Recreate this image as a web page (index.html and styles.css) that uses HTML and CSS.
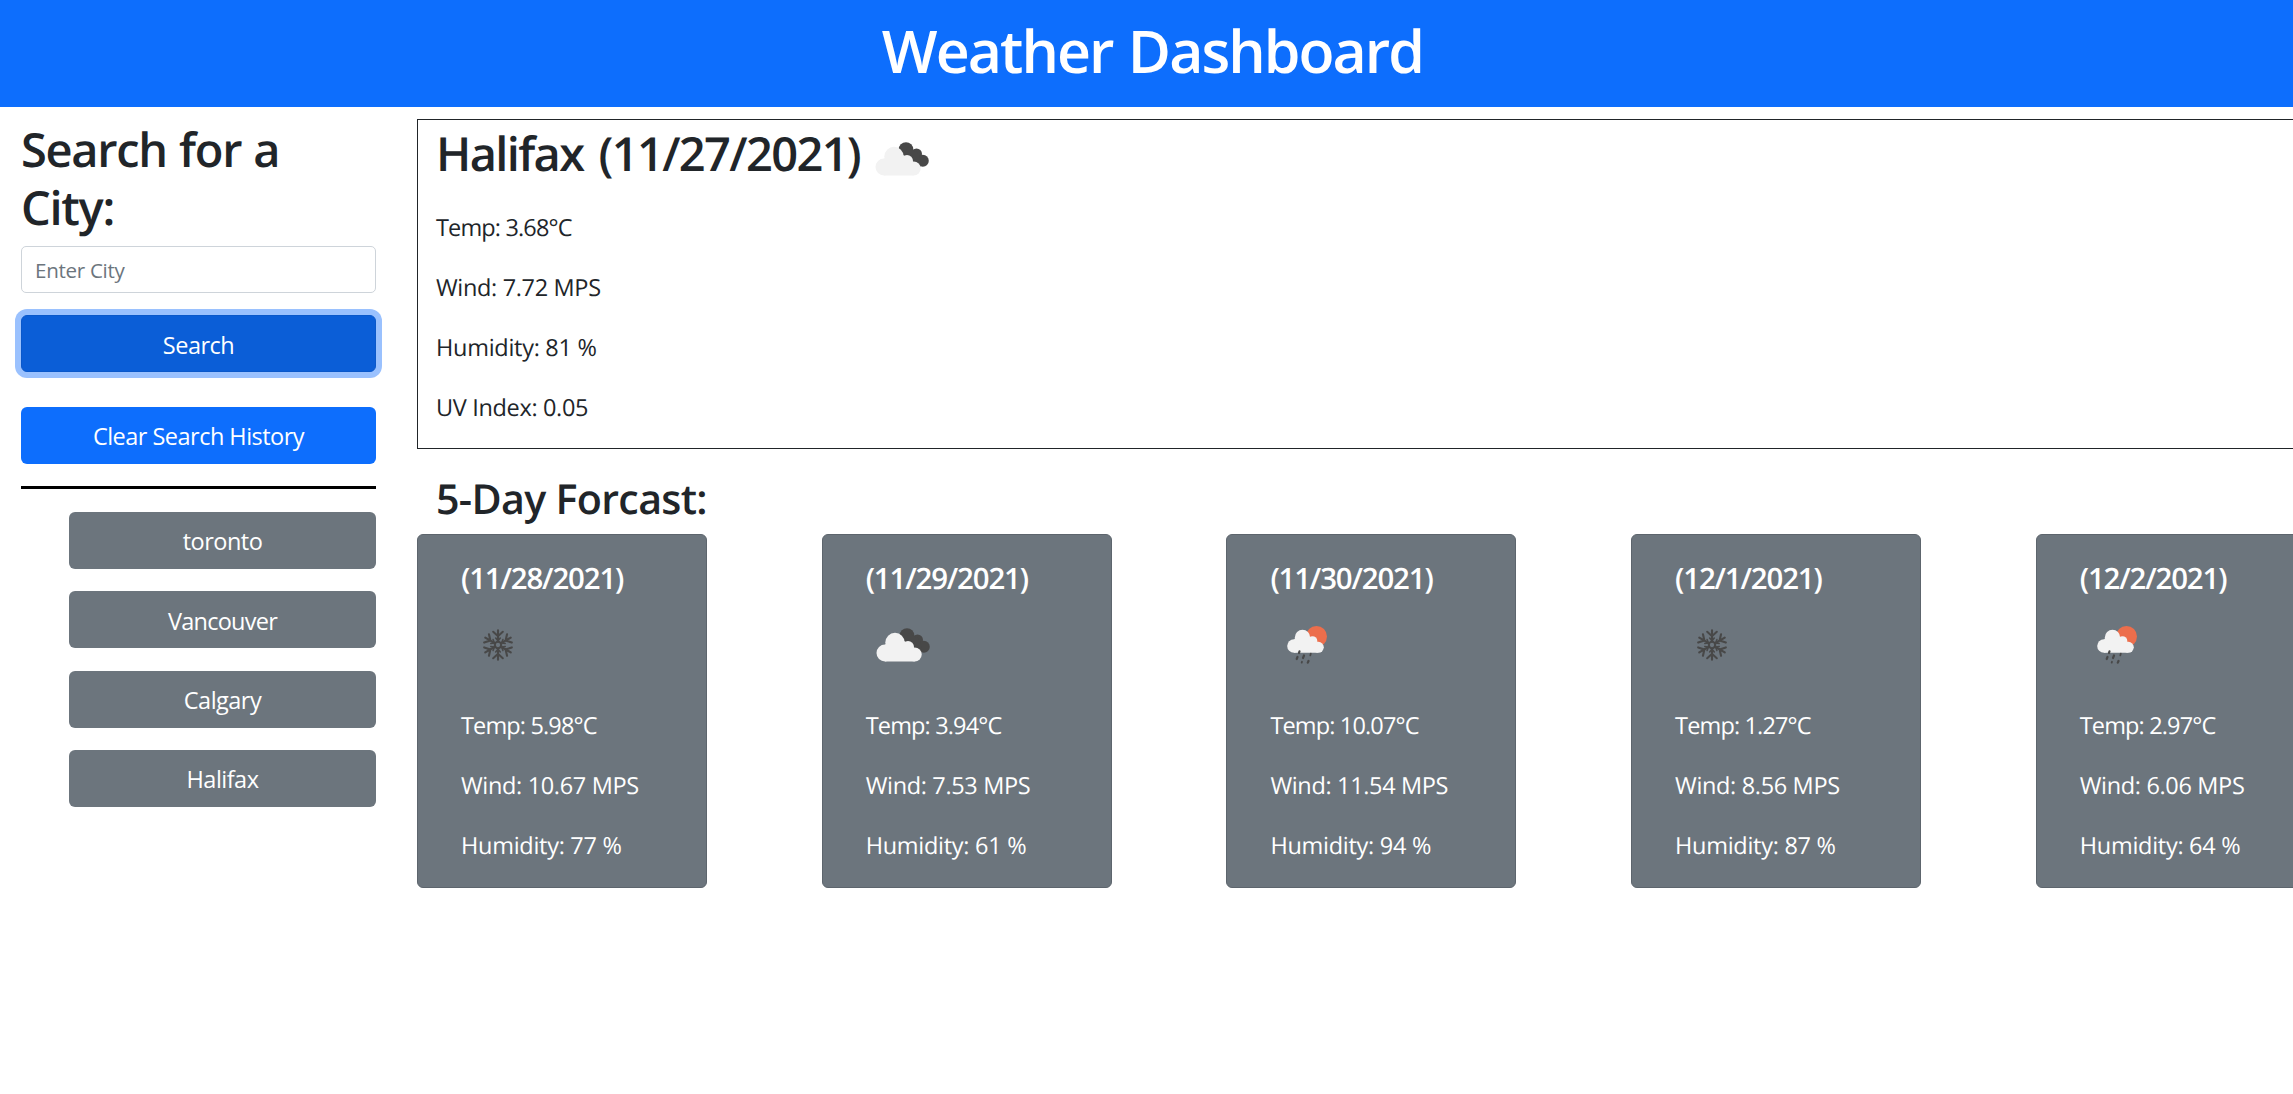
FILE: index.html
```html
<!DOCTYPE html>
<html lang="en">
<head>
<meta charset="utf-8">
<title>Weather Dashboard</title>
<link rel="stylesheet" href="styles.css">
</head>
<body>
<svg class="sprite" aria-hidden="true">
  <symbol id="clouds" viewBox="0 0 54 34">
    <g fill="#484848">
      <circle cx="31" cy="7.500" r="7.300"/>
      <circle cx="41.500" cy="12" r="5.500"/>
      <circle cx="47.800" cy="18.800" r="6"/>
      <path d="M26 12 34 5 44 12 46 24.500 36 22z"/>
    </g>
    <g fill="#f2f2f2">
      <circle cx="9" cy="25" r="8.500"/>
      <circle cx="19" cy="14.500" r="9.700"/>
      <circle cx="32" cy="19" r="6"/>
      <circle cx="38.700" cy="26.500" r="7"/>
      <path d="M9 17 12 13 28 13 38 19.500 38.700 33.500H9z"/>
    </g>
  </symbol>
  <symbol id="rain" viewBox="0 0 40 38">
    <circle cx="29.500" cy="10.500" r="10.500" fill="#ec6e4c"/>
    <g fill="#f2f2f2">
      <circle cx="7" cy="20" r="6.800"/>
      <circle cx="15.500" cy="11.500" r="7.700"/>
      <circle cx="25.500" cy="15" r="4.800"/>
      <circle cx="31.300" cy="21.300" r="5.500"/>
      <path d="M7 13.500 10 10 22 11 31 16 31.300 26.800H7z"/>
    </g>
    <g stroke="#484848" stroke-width="2.200" stroke-linecap="round">
      <path d="M12.500 25.300 12 27"/>
      <path d="M10.500 31 9.700 33"/>
      <path d="M17 29.500 16 32"/>
      <path d="M23.800 27.500 23.300 29.500" stroke-width="1.700"/>
      <path d="M15 35.800 14.700 36.600" stroke-width="1.800"/>
      <path d="M21.500 35 20.800 36.700"/>
    </g>
  </symbol>
  <symbol id="snow" viewBox="-15 -16 30 32">
    <g fill="none" stroke="#484848" stroke-width="2.100" stroke-linecap="round">
      <circle r="3.200"/>
      <g id="arm"><path d="M0-4V-14.700M-4.800-13.200 0-8.800 4.800-13.200"/><path d="M-2.300-7 0-4.200 2.300-7" stroke-width="1.500"/></g>
      <use href="#arm" transform="rotate(60)"/>
      <use href="#arm" transform="rotate(120)"/>
      <use href="#arm" transform="rotate(180)"/>
      <use href="#arm" transform="rotate(240)"/>
      <use href="#arm" transform="rotate(300)"/>
    </g>
  </symbol>
</svg>

<header class="page-header"><h1>Weather Dashboard</h1></header>

<main class="layout">
  <aside class="sidebar">
    <h2 class="search-title">Search for a City:</h2>
    <input class="city-input" type="text" placeholder="Enter City">
    <button class="btn btn-primary is-focused">Search</button>
    <button class="btn btn-primary btn-clear">Clear Search History</button>
    <hr class="divider">
    <ul class="history">
      <li><button class="btn btn-secondary toronto">toronto</button></li>
      <li><button class="btn btn-secondary vancouver">Vancouver</button></li>
      <li><button class="btn btn-secondary">Calgary</button></li>
      <li><button class="btn btn-secondary">Halifax</button></li>
    </ul>
  </aside>

  <div class="content">
    <section class="current">
      <h2 class="current-title">Halifax (11/27/2021)<svg class="icon-current"><use href="#clouds"/></svg></h2>
      <p class="temp">Temp: 3.68°C</p>
      <p class="wind">Wind: 7.72 MPS</p>
      <p class="humidity">Humidity: 81 %</p>
      <p class="wind">UV Index: 0.05</p>
    </section>

    <h3 class="forecast-title">5-Day Forcast:</h3>
    <section class="forecast">
      <article class="card">
        <h4>(11/28/2021)</h4>
        <div class="icon-row"><svg class="icon-snow"><use href="#snow"/></svg></div>
        <p class="temp">Temp: 5.98°C</p><p class="wind">Wind: 10.67 MPS</p><p class="humidity">Humidity: 77 %</p>
      </article>
      <article class="card">
        <h4>(11/29/2021)</h4>
        <div class="icon-row"><svg class="icon-clouds"><use href="#clouds"/></svg></div>
        <p class="temp">Temp: 3.94°C</p><p class="wind">Wind: 7.53 MPS</p><p class="humidity">Humidity: 61 %</p>
      </article>
      <article class="card">
        <h4>(11/30/2021)</h4>
        <div class="icon-row"><svg class="icon-rain"><use href="#rain"/></svg></div>
        <p class="temp">Temp: 10.07°C</p><p class="wind">Wind: 11.54 MPS</p><p class="humidity">Humidity: 94 %</p>
      </article>
      <article class="card">
        <h4>(12/1/2021)</h4>
        <div class="icon-row"><svg class="icon-snow"><use href="#snow"/></svg></div>
        <p class="temp">Temp: 1.27°C</p><p class="wind">Wind: 8.56 MPS</p><p class="humidity">Humidity: 87 %</p>
      </article>
      <article class="card">
        <h4>(12/2/2021)</h4>
        <div class="icon-row"><svg class="icon-rain"><use href="#rain"/></svg></div>
        <p class="temp">Temp: 2.97°C</p><p class="wind">Wind: 6.06 MPS</p><p class="humidity">Humidity: 64 %</p>
      </article>
    </section>
  </div>
</main>
</body>
</html>
```
FILE: styles.css
```css
* { box-sizing: border-box; }

html { overflow: hidden; }

body {
  margin: 0;
  overflow: hidden;
  min-height: 100vh;
  background: #fff;
  color: #212529;
  font: 400 23.5px/36px "Open Sans", "Noto Sans", sans-serif;
  text-rendering: geometricPrecision;
}

h1, h2, h3, h4, p, ul { margin: 0; padding: 0; font-weight: 600; }
p, ul { font-weight: 400; }

.sprite { display: block; width: 0; height: 0; }

.page-header {
  height: 107px;
  padding-top: 15px;
  background: #0d6efd;
  color: #fff;
  text-align: center;
}
.page-header h1 {
  font-size: 59px;
  line-height: 72px;
  letter-spacing: -1.95px;
  word-spacing: 2px;
  padding-left: 12px;
}

.layout { display: flex; }

.sidebar {
  flex: 0 0 417px;
  padding: 14px 41px 0 21px;
}
.search-title {
  height: 125px;
  font-size: 47px;
  line-height: 57.6px;
  letter-spacing: -1.3px;
  word-spacing: 1.3px;
}
.city-input {
  display: block;
  width: 100%;
  height: 47px;
  padding: 1px 13px 0;
  border: 1px solid #ced4da;
  border-radius: 5px;
  background: #fff;
  font: 400 20.6px/30px "Open Sans", "Noto Sans", sans-serif;
  letter-spacing: -0.3px;
}
.city-input::placeholder { color: #6c757d; opacity: 1; }

.btn {
  display: block;
  width: 100%;
  height: 57px;
  padding: 2px 0 0;
  border: 0;
  border-radius: 6px;
  color: #fff;
  font: 400 23.5px/36px "Open Sans", "Noto Sans", sans-serif;
  letter-spacing: -0.52px;
  text-align: center;
}
.btn-primary { background: #0d6efd; }
.is-focused {
  margin-top: 22px;
  border: 1px solid #0a58ca;
  background: #0b5ed7;
  box-shadow: 0 0 0 6px #9ac1fe;
}
.btn-clear { margin-top: 35px; padding: 0; }
.btn-secondary { background: #6c757d; }
.toronto { padding: 0; }
.vancouver { letter-spacing: -0.75px; }

.divider {
  height: 3px;
  margin: 22px 0 23px;
  border: 0;
  background: #000;
}
.history {
  display: grid;
  gap: 22.3px;
  padding-left: 48px;
  list-style: none;
}

.content {
  flex: 0 0 1909px;
  padding-top: 12px;
}
.current {
  height: 330px;
  padding: 4px 0 0 18px;
  border: 1px solid #212529;
}
.current-title {
  display: flex;
  align-items: flex-start;
  height: 85px;
  font-size: 47px;
  line-height: 58px;
  letter-spacing: -1.65px;
  word-spacing: 4.5px;
}
.icon-current { width: 54px; height: 34px; margin: 18px 0 0 15px; }

p { height: 60px; padding-bottom: 24px; }
.temp { letter-spacing: -0.85px; }
.wind { letter-spacing: -0.34px; }
.humidity { letter-spacing: -0.28px; }

.forecast-title {
  height: 85px;
  padding: 25px 0 0 19px;
  font-size: 41.2px;
  line-height: 50px;
  letter-spacing: -0.68px;
}
.forecast {
  display: flex;
  gap: 114.7px;
}
.card {
  flex: 0 0 290px;
  height: 354px;
  padding: 25px 0 0 43px;
  border: 1px solid #5d656d;
  border-radius: 6px;
  background: #6c757d;
  color: #fff;
}
.card h4 {
  font-size: 29.4px;
  line-height: 36px;
  letter-spacing: -1.15px;
}
.icon-row { height: 111px; padding-top: 29px; }
.icon-row svg { display: block; }
.icon-snow { width: 30px; height: 32px; margin: 4px 0 0 22px; }
.icon-clouds { width: 54px; height: 34px; margin: 3px 0 0 10px; }
.icon-rain { width: 40px; height: 38px; margin: 1px 0 0 17px; }
```
